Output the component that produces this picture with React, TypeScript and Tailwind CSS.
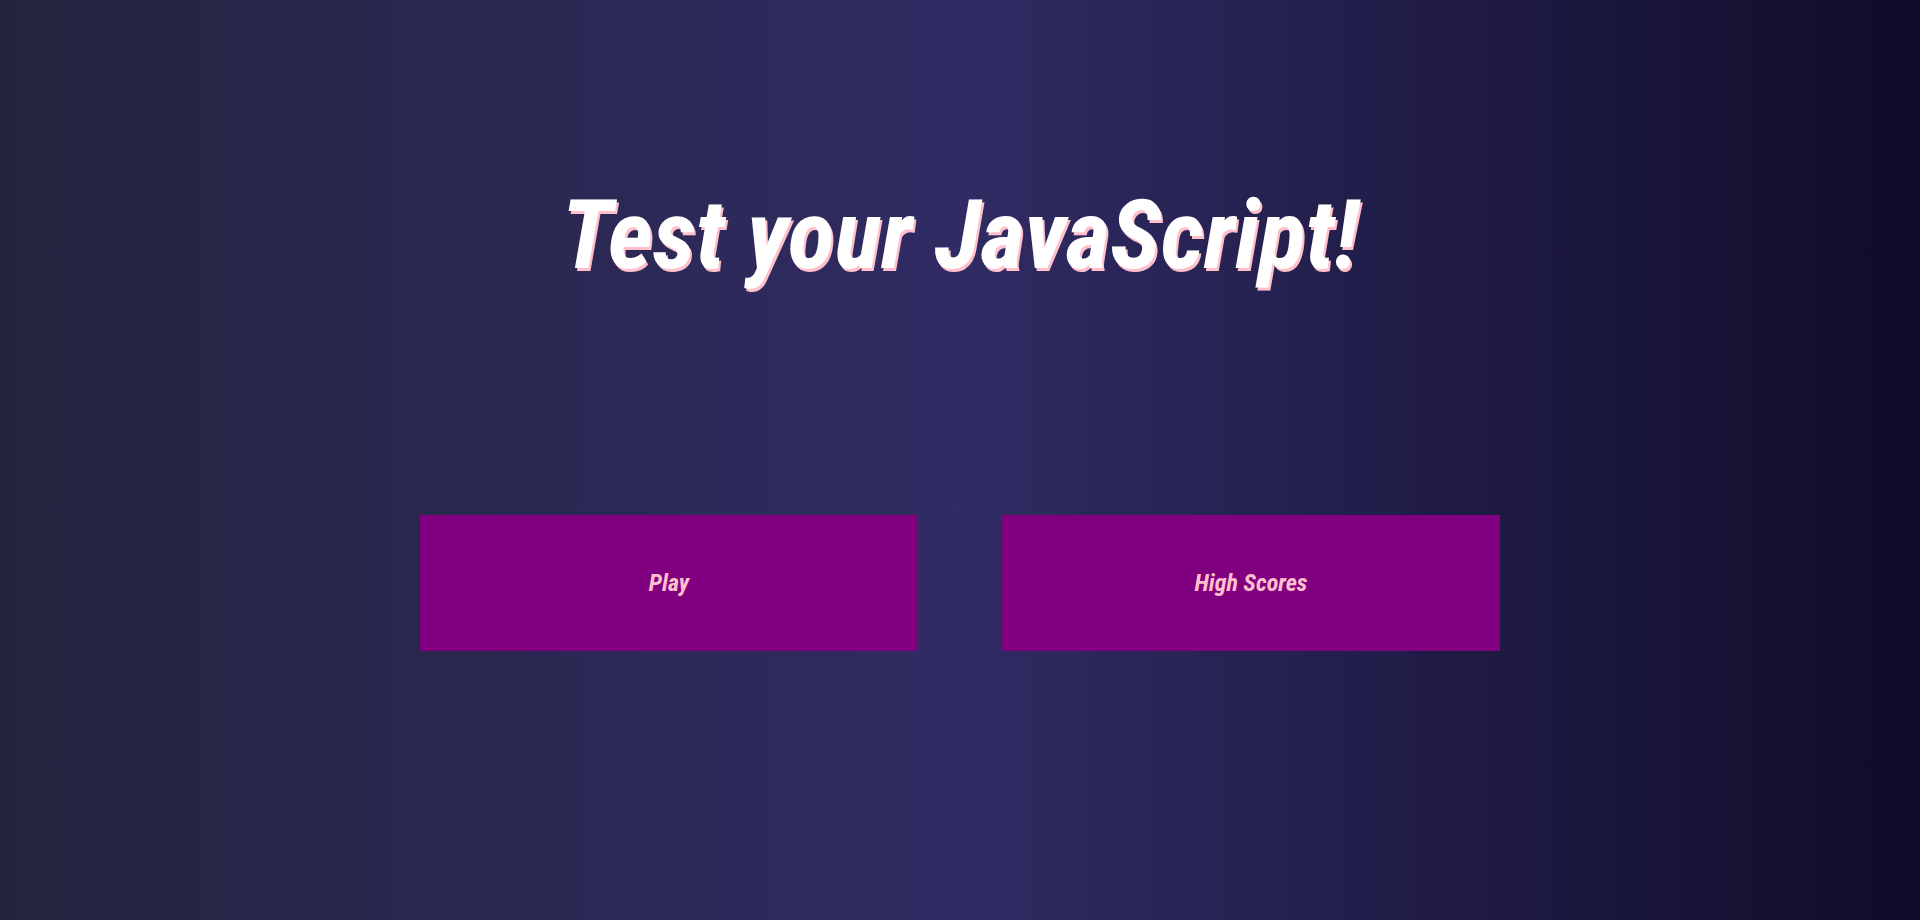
import React from 'react';

const App = () => {
  return (
    <div className="min-h-[920px] w-full bg-[linear-gradient(to_right,#24243e,#302b63,#0f0c29)] font-['Roboto',sans-serif] [font-stretch:condensed]">
      <div className="flex flex-col items-center pt-[177px]">
        <h1 className="text-[97px] leading-[1.2] font-bold italic text-white [text-shadow:2px_3px_0_#ffc0cb]">
          Test your JavaScript!
        </h1>
        <div className="mt-[222px] flex gap-[84px]">
          <button className="w-[498px] h-[136px] bg-[#800080] text-[#ffc0cb] text-[24px] font-bold italic [font-stretch:condensed]">
            Play
          </button>
          <button className="w-[498px] h-[136px] bg-[#800080] text-[#ffc0cb] text-[24px] font-bold italic [font-stretch:condensed]">
            High Scores
          </button>
        </div>
      </div>
    </div>
  );
};

export default App;
